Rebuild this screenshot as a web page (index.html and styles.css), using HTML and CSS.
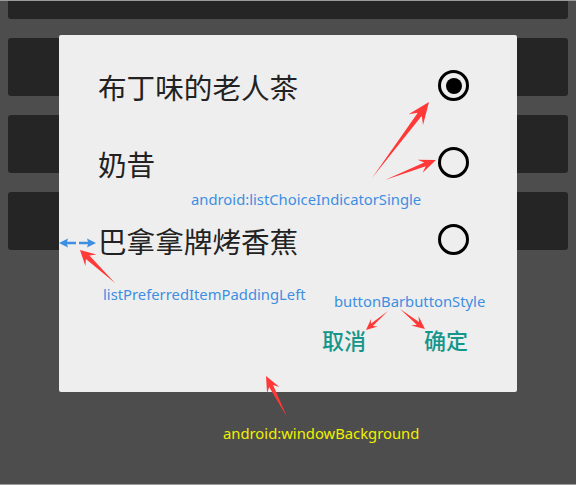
FILE: index.html
```html
<!DOCTYPE html>
<html lang="zh-CN">
<head>
<meta charset="utf-8">
<title>Dialog</title>
<link rel="stylesheet" href="styles.css">
</head>
<body>
<div class="screen">
  <div class="cards">
    <div class="card"></div>
    <div class="card"></div>
    <div class="card"></div>
    <div class="card"></div>
  </div>

  <div class="dialog">
    <ul class="choices">
      <li class="choice"><span class="label">布丁味的老人茶</span><span class="radio checked"></span></li>
      <li class="choice"><span class="label">奶昔</span><span class="radio"></span></li>
      <li class="choice"><span class="label">巴拿拿牌烤香蕉</span><span class="radio"></span></li>
    </ul>
    <div class="buttons">
      <span class="btn">取消</span>
      <span class="btn">确定</span>
    </div>
  </div>

  <svg class="marks" width="576" height="485" viewBox="0 0 576 485">
    <g fill="#ff3838">
      <polygon points="372,177 421.8,114.8 423,124 429,101 408.6,113.2 417.8,111.8"/>
      <polygon points="385,179 425.7,165.2 422.7,171.7 436,159 417.6,158.7 424.2,161.5"/>
      <polygon points="115,282 89.4,254.4 96.4,253.5 80,249 85.4,265.1 85.9,258"/>
      <polygon points="388,310 370.9,322.8 371.1,318 366,329 377.6,325.6 372.8,325.1"/>
      <polygon points="400,308 416.8,323.7 411.1,324.6 425,328 418.6,315.2 419,320.9"/>
      <polygon points="287,416 273.1,384 279.5,386 266,375 267.1,392.4 269.1,386"/>
    </g>
    <g fill="#3d8fe2">
      <polygon points="59,242 68,237.5 67,240.8 76,240.8 76,243.2 67,243.2 68,246.5"/>
      <polygon points="96,242 87,237.5 88,240.8 79,240.8 79,243.2 88,243.2 87,246.5"/>
    </g>
  </svg>

  <span class="note note-indicator">android:listChoiceIndicatorSingle</span>
  <span class="note note-padding">listPreferredItemPaddingLeft</span>
  <span class="note note-button">buttonBarbuttonStyle</span>
  <span class="note note-window">android:windowBackground</span>
</div>
</body>
</html>
```

FILE: styles.css
```css
html, body {
  margin: 0;
  padding: 0;
}

body {
  background: #4d4d4d;
  font-family: "Noto Sans CJK SC", "Noto Sans", sans-serif;
}

.screen {
  position: relative;
  width: 576px;
  height: 485px;
  overflow: hidden;
  background: #4d4d4d;
  box-sizing: border-box;
  border-top: 1px solid #9c9c9c;
  border-bottom: 1px solid #9c9c9c;
}

.cards {
  display: flex;
  flex-direction: column;
  gap: 19px;
  padding: 0 8px;
  margin-top: -40px;
}

.card {
  height: 58px;
  background: #252525;
  border-radius: 3px;
}

.dialog {
  position: absolute;
  left: 59px;
  top: 34px;
  width: 458px;
  height: 357px;
  background: #eeeeee;
  border-radius: 2px;
  box-sizing: border-box;
  padding-top: 13px;
  display: flex;
  flex-direction: column;
}

.choices {
  list-style: none;
  margin: 0;
  padding: 0;
}

.choice {
  height: 77px;
  display: flex;
  align-items: center;
  justify-content: space-between;
  padding: 0 48px 0 39px;
}

.label {
  font-size: 28.6px;
  line-height: 34px;
  color: #222222;
}

.radio {
  width: 31px;
  height: 31px;
  box-sizing: border-box;
  border: 3px solid #000000;
  border-radius: 50%;
  display: flex;
  align-items: center;
  justify-content: center;
  margin-bottom: 2px;
}

.radio.checked::after {
  content: "";
  width: 16px;
  height: 16px;
  border-radius: 50%;
  background: #000000;
}

.buttons {
  display: flex;
  justify-content: flex-end;
  gap: 58px;
  padding-right: 49px;
  margin-top: 48px;
}

.btn {
  font-size: 22px;
  line-height: 24px;
  font-weight: 500;
  color: #14968a;
}

.marks {
  position: absolute;
  left: 0;
  top: 0;
}

.note {
  position: absolute;
  font-family: "Noto Sans", sans-serif;
  font-size: 14.8px;
  line-height: 20px;
  color: #3d8fe2;
  white-space: nowrap;
}

.note-indicator { left: 191px; top: 188px; }
.note-padding   { left: 103px; top: 283px; }
.note-button    { left: 334px; top: 290px; }
.note-window    { left: 223px; top: 422px; color: #f0f000; }
```
